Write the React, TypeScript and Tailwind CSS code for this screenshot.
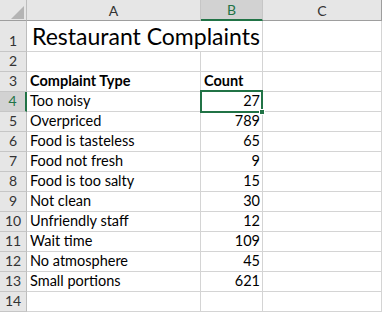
import React from "react";

const rows: [string, string][] = [
  ["Too noisy", "27"],
  ["Overpriced", "789"],
  ["Food is tasteless", "65"],
  ["Food not fresh", "9"],
  ["Food is too salty", "15"],
  ["Not clean", "30"],
  ["Unfriendly staff", "12"],
  ["Wait time", "109"],
  ["No atmosphere", "45"],
  ["Small portions", "621"],
];

const font = { fontFamily: "Lato, 'Open Sans', sans-serif" };

function RowHead({ n, h, selected }: { n: number; h: string; selected?: boolean }) {
  return (
    <div
      className={`${h} flex items-end justify-center border-b border-b-[#c6c6c6] ${
        selected ? "bg-[#d2d2d2] border-r-2 border-r-[#217346] text-[#217346]" : "bg-[#e6e6e6] border-r border-r-[#bdbdbd] text-[#333]"
      } text-[14px] leading-[18px] pb-[1px]`}
    >
      {n}
    </div>
  );
}

function Cell({
  children,
  h,
  right,
  bold,
  noRightBorder,
}: {
  children?: React.ReactNode;
  h: string;
  right?: boolean;
  bold?: boolean;
  noRightBorder?: boolean;
}) {
  return (
    <div
      className={`${h} flex items-end ${right ? "justify-end pr-[2px]" : "justify-start pl-[3px]"} border-b border-b-[#d4d4d4] ${
        noRightBorder ? "" : "border-r border-r-[#d4d4d4]"
      } bg-white text-black text-[14.5px] leading-[18px] pb-[1px] whitespace-nowrap ${bold ? "font-bold" : ""}`}
    >
      {children}
    </div>
  );
}

export default function App() {
  return (
    <div className="relative w-[382px] h-[312px] overflow-hidden bg-white" style={font}>
      <div className="grid grid-cols-[27px_174px_62px_119px]">
        {/* header row */}
        <div className="relative h-[21px] bg-[#e6e6e6] border-b border-b-[#9e9e9e] border-r border-r-[#bdbdbd]">
          <svg className="absolute left-[11px] top-[6px]" width="13" height="13" viewBox="0 0 13 13">
            <polygon points="13,0 13,13 0,13" fill="#b4b4b4" />
          </svg>
        </div>
        <div className="h-[21px] bg-[#e6e6e6] border-b border-b-[#9e9e9e] border-r border-r-[#c6c6c6] flex items-center justify-center text-[14px] text-[#333]">
          A
        </div>
        <div className="h-[21px] bg-[#d2d2d2] border-b-2 border-b-[#217346] border-r border-r-[#c6c6c6] flex items-center justify-center text-[14px] text-[#217346]">
          B
        </div>
        <div className="h-[21px] bg-[#e6e6e6] border-b border-b-[#9e9e9e] border-r border-r-[#9e9e9e] flex items-center justify-center text-[14px] text-[#333]">
          C
        </div>

        {/* row 1 */}
        <RowHead n={1} h="h-[31px]" />
        <div className="h-[31px] relative border-b border-b-[#d4d4d4] bg-white">
          <span className="absolute left-[5px] bottom-[1px] text-[23px] leading-[28px] text-black whitespace-nowrap">
            Restaurant Complaints
          </span>
        </div>
        <Cell h="h-[31px]" />
        <Cell h="h-[31px]" />

        {/* row 2 */}
        <RowHead n={2} h="h-[20px]" />
        <Cell h="h-[20px]" />
        <Cell h="h-[20px]" />
        <Cell h="h-[20px]" />

        {/* row 3 */}
        <RowHead n={3} h="h-[20px]" />
        <Cell h="h-[20px]" bold>
          Complaint Type
        </Cell>
        <Cell h="h-[20px]" bold>
          Count
        </Cell>
        <Cell h="h-[20px]" />

        {rows.map(([a, b], i) => (
          <React.Fragment key={a}>
            <RowHead n={i + 4} h="h-[20px]" selected={i === 0} />
            <Cell h="h-[20px]">{a}</Cell>
            <Cell h="h-[20px]" right>
              {b}
            </Cell>
            <Cell h="h-[20px]" />
          </React.Fragment>
        ))}

        <RowHead n={14} h="h-[20px]" />
        <Cell h="h-[20px]" />
        <Cell h="h-[20px]" />
        <Cell h="h-[20px]" />
      </div>

      {/* selection */}
      <div className="absolute left-[200px] top-[90px] w-[63px] h-[23px] border-2 border-[#217346] pointer-events-none" />
      <div className="absolute left-[259px] top-[109px] w-[6px] h-[6px] bg-[#217346] border border-white" />
    </div>
  );
}
